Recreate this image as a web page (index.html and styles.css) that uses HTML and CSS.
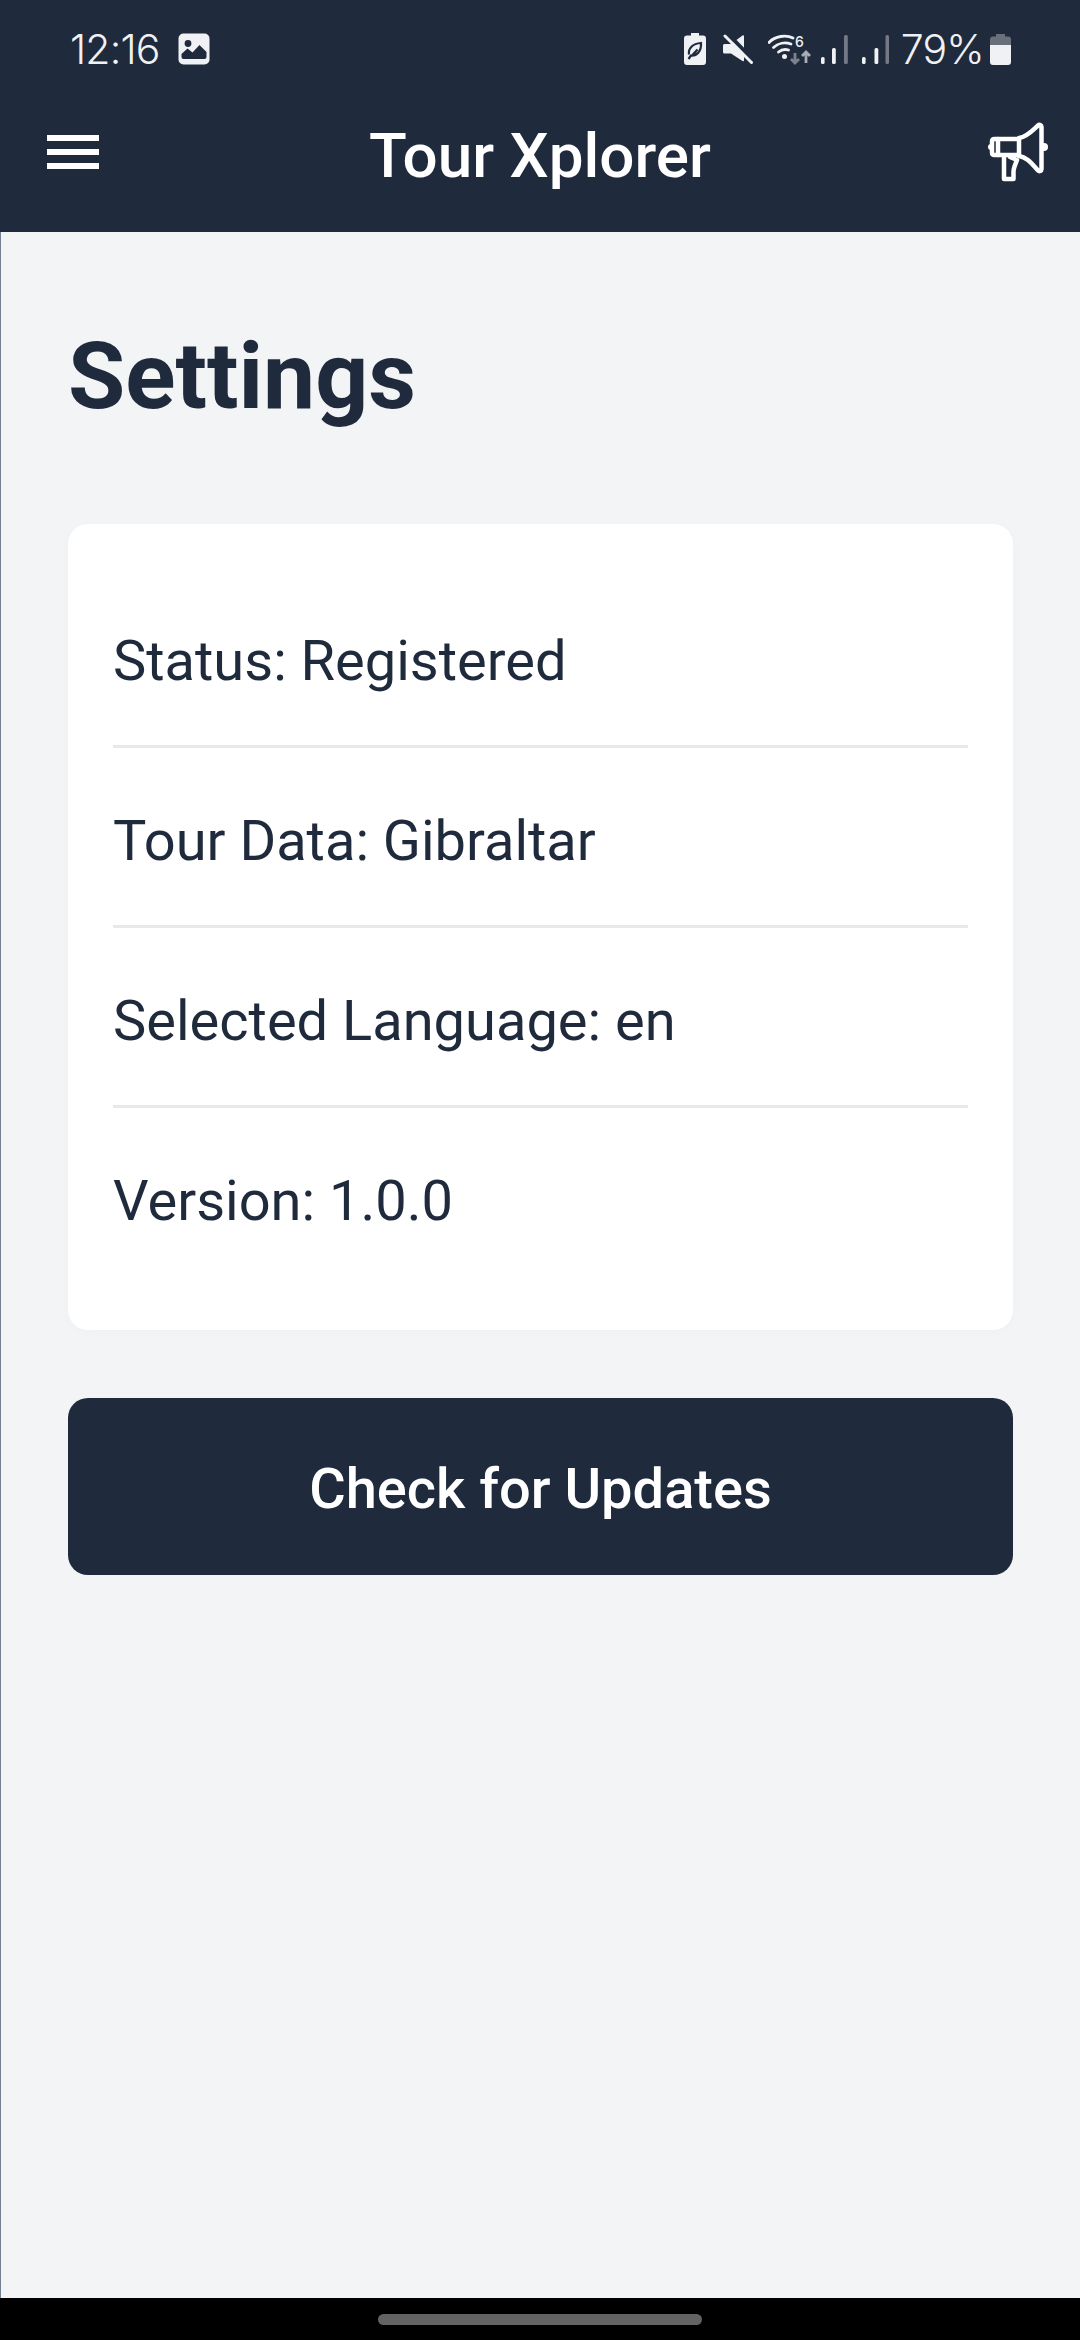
FILE: index.html
```html
<!DOCTYPE html>
<html lang="en">
<head>
<meta charset="utf-8">
<title>Tour Xplorer</title>
<link rel="stylesheet" href="styles.css">
</head>
<body>
<div class="screen">
  <header class="header">
    <div class="status">
      <div class="status-left">
        <span class="time">12:16</span>
        <svg class="ic-img" width="32" height="32" viewBox="0 0 32 32"><rect width="31" height="31" x=".5" y=".5" rx="5" fill="#eff1f4"/><circle cx="10" cy="10.500" r="3.400" fill="#1f2a3c"/><path d="M3.500 24v-3l6-5.500 5 4 7-7.500 7 7v5a2 2 0 0 1-2 2H5.500a2 2 0 0 1-2-2z" fill="#1f2a3c"/></svg>
      </div>
      <div class="status-right">
        <svg width="22" height="32" viewBox="0 0 22 32"><path d="M7 0h8v2.500h4a3 3 0 0 1 3 3V29a3 3 0 0 1-3 3H3a3 3 0 0 1-3-3V5.500a3 3 0 0 1 3-3h4z" fill="#eff1f4"/><path d="M5 21.500c-1-6 3.500-11 12-11.500 .5 8-4 13-10 12.500l-2.500 3.500M8 22.500l5.500-6" fill="none" stroke="#1f2a3c" stroke-width="2.200"/></svg>
        <svg class="gap-mute" width="30" height="30" viewBox="0 0 30 30"><path d="M1.500 10H8L19.500 1.500q1.500-1 1.500 1V26q0 2-1.500 1L8 19.500H1.500Q0 19.500 0 18v-6.500Q0 10 1.500 10z" fill="#eff1f4"/><path d="M5 0l25 26" stroke="#1f2a3c" stroke-width="4"/><path d="M2 2l26.500 26.500" stroke="#eff1f4" stroke-width="3" stroke-linecap="round"/></svg>
        <svg class="gap-wifi" width="44" height="36" viewBox="0 -2 44 36"><g fill="none" stroke="#eff1f4" stroke-width="2.800" stroke-linecap="round"><path d="M1 9.500C7 3 18 1.500 25 5"/><path d="M5.500 14.500C10 10 17 9 23 11"/><path d="M10.500 19c3-2.500 6.500-3 10-2"/></g><circle cx="16.500" cy="23.500" r="2.500" fill="#eff1f4"/><text x="27" y="14" class="wifi-six">6</text><path d="M27 20v10M23 26l4 4 4-4" fill="none" stroke="#7d838d" stroke-width="2.800"/><path d="M38 30V19M34 23l4-4 4 4" fill="none" stroke="#a8acb3" stroke-width="2.800"/></svg>
        <svg class="gap-sig" width="27" height="30" viewBox="0 0 27 30"><rect x="0" y="23" width="3.600" height="7" rx="1.500" fill="#eff1f4"/><rect x="11" y="14" width="3.800" height="16" rx="1.500" fill="#eff1f4"/><rect x="23" y="1" width="3.800" height="29" rx="1.500" fill="#747a85"/></svg>
        <svg class="gap-sig2" width="27" height="30" viewBox="0 0 27 30"><rect x="0" y="23" width="3.600" height="7" rx="1.500" fill="#eff1f4"/><rect x="12.500" y="14" width="3.800" height="16" rx="1.500" fill="#eff1f4"/><rect x="23.500" y="1" width="3.500" height="29" rx="1.500" fill="#747a85"/></svg>
        <span class="pct">79%</span>
        <svg class="gap-batt" width="21" height="31" viewBox="0 0 21 31"><path d="M6 0h9v2.500h3a3 3 0 0 1 3 3V11H0V5.500a3 3 0 0 1 3-3h3z" fill="#6a707b"/><path d="M0 11h21v17a3 3 0 0 1-3 3H3a3 3 0 0 1-3-3z" fill="#eff1f4"/></svg>
      </div>
    </div>
    <div class="appbar">
      <div class="burger"><span></span><span></span><span></span></div>
      <h1 class="app-title">Tour Xplorer</h1>
      <svg class="horn" width="60" height="60" viewBox="0 0 60 60"><g fill="none" stroke="#fff" stroke-width="4.500" stroke-linejoin="round" stroke-linecap="round"><path d="M31 17H6.500q-2.500 0-2.500 2.500v11q0 2.500 2.500 2.500H31z"/><path d="M10 17v16"/><path d="M31 16c8-1 14-8 19-12.500 1.500-1.300 3.500-.5 3.500 1.500v42c0 2-2 3-3.500 1.500C44 42 39 35 31 34"/><path d="M16 35v22h9.500v-7c0-4 2-8 3.500-12l-7-3"/></g><circle cx="56" cy="25" r="4" fill="#fff"/><circle cx="3" cy="25" r="3" fill="#fff"/></svg>
    </div>
  </header>
  <main class="content">
    <h2 class="page-title">Settings</h2>
    <section class="card">
      <div class="row">Status: Registered</div>
      <div class="row">Tour Data: Gibraltar</div>
      <div class="row">Selected Language: en</div>
      <div class="row">Version: 1.0.0</div>
    </section>
    <button class="update">Check for Updates</button>
  </main>
  <footer class="navbar"><span class="handle"></span></footer>
</div>
</body>
</html>
```
FILE: styles.css
```css
* { box-sizing: border-box; }
html, body { margin: 0; padding: 0; }
body { width: 1080px; height: 2340px; overflow: hidden; font-family: Roboto, "Liberation Sans", sans-serif; color: #1f2a3c; background: #f3f4f6; }
.screen { display: flex; flex-direction: column; height: 2340px; }
.header { height: 232px; background: #1f2a3c; color: #fff; flex: none; }
.status { display: flex; justify-content: space-between; align-items: center; height: 66px; padding: 32px 69px 0 70px; }
.status-left { display: flex; align-items: center; gap: 18px; }
.time { font-family: Inter, Roboto, sans-serif; font-weight: 300; font-size: 41px; line-height: 34px; color: #eff1f4; letter-spacing: -.8px; }
.ic-img { display: block; }
.status-right { display: flex; align-items: center; }
.status-right svg { display: block; flex: none; }
.gap-mute { margin-left: 17px; }
.gap-wifi { margin-left: 15px; }
.gap-sig { margin-left: 9px; }
.gap-sig2 { margin-left: 14px; }
.gap-batt { margin-left: 6px; }
.wifi-six { font-family: Inter, sans-serif; font-size: 14px; font-weight: 500; fill: #eff1f4; }
.pct { font-family: Inter, Roboto, sans-serif; font-weight: 300; font-size: 41px; line-height: 34px; color: #eff1f4; margin-left: 12px; letter-spacing: -.8px; }
.appbar { display: flex; align-items: center; justify-content: space-between; height: 166px; padding: 6px 32px 0 47px; position: relative; }
.burger { display: flex; flex-direction: column; gap: 8px; width: 52px; }
.burger span { display: block; height: 6px; background: #fff; }
.app-title { position: absolute; left: 0; right: 0; top: 12px; bottom: 0; margin: 0; display: flex; align-items: center; justify-content: center; font-size: 62px; font-weight: 500; color: #fff; }
.horn { display: block; position: relative; }
.content { flex: 1; border-left: 1px solid #748191; padding: 0 67px; display: flex; flex-direction: column; }
.page-title { margin: 95px 0 0; font-size: 93px; line-height: 100px; font-weight: 700; color: #1f2a3c; }
.card { margin-top: 97px; background: #fff; border-radius: 20px; padding: 44px 45px 42px; box-shadow: 0 2px 12px rgba(0,0,0,.02); }
.row { height: 180px; padding-top: 48px; font-size: 56px; line-height: 90px; border-bottom: 3px solid #e6e8eb; }
.row:last-child { border-bottom: 0; }
.update { margin-top: 68px; height: 177px; padding-top: 6px; border: 0; border-radius: 20px; background: #1f2a3c; color: #fff; font-family: inherit; font-size: 56px; font-weight: 500; }
.navbar { height: 42px; flex: none; background: #000; display: flex; justify-content: center; padding-top: 16px; }
.handle { width: 324px; height: 11px; border-radius: 6px; background: #636363; }
```
